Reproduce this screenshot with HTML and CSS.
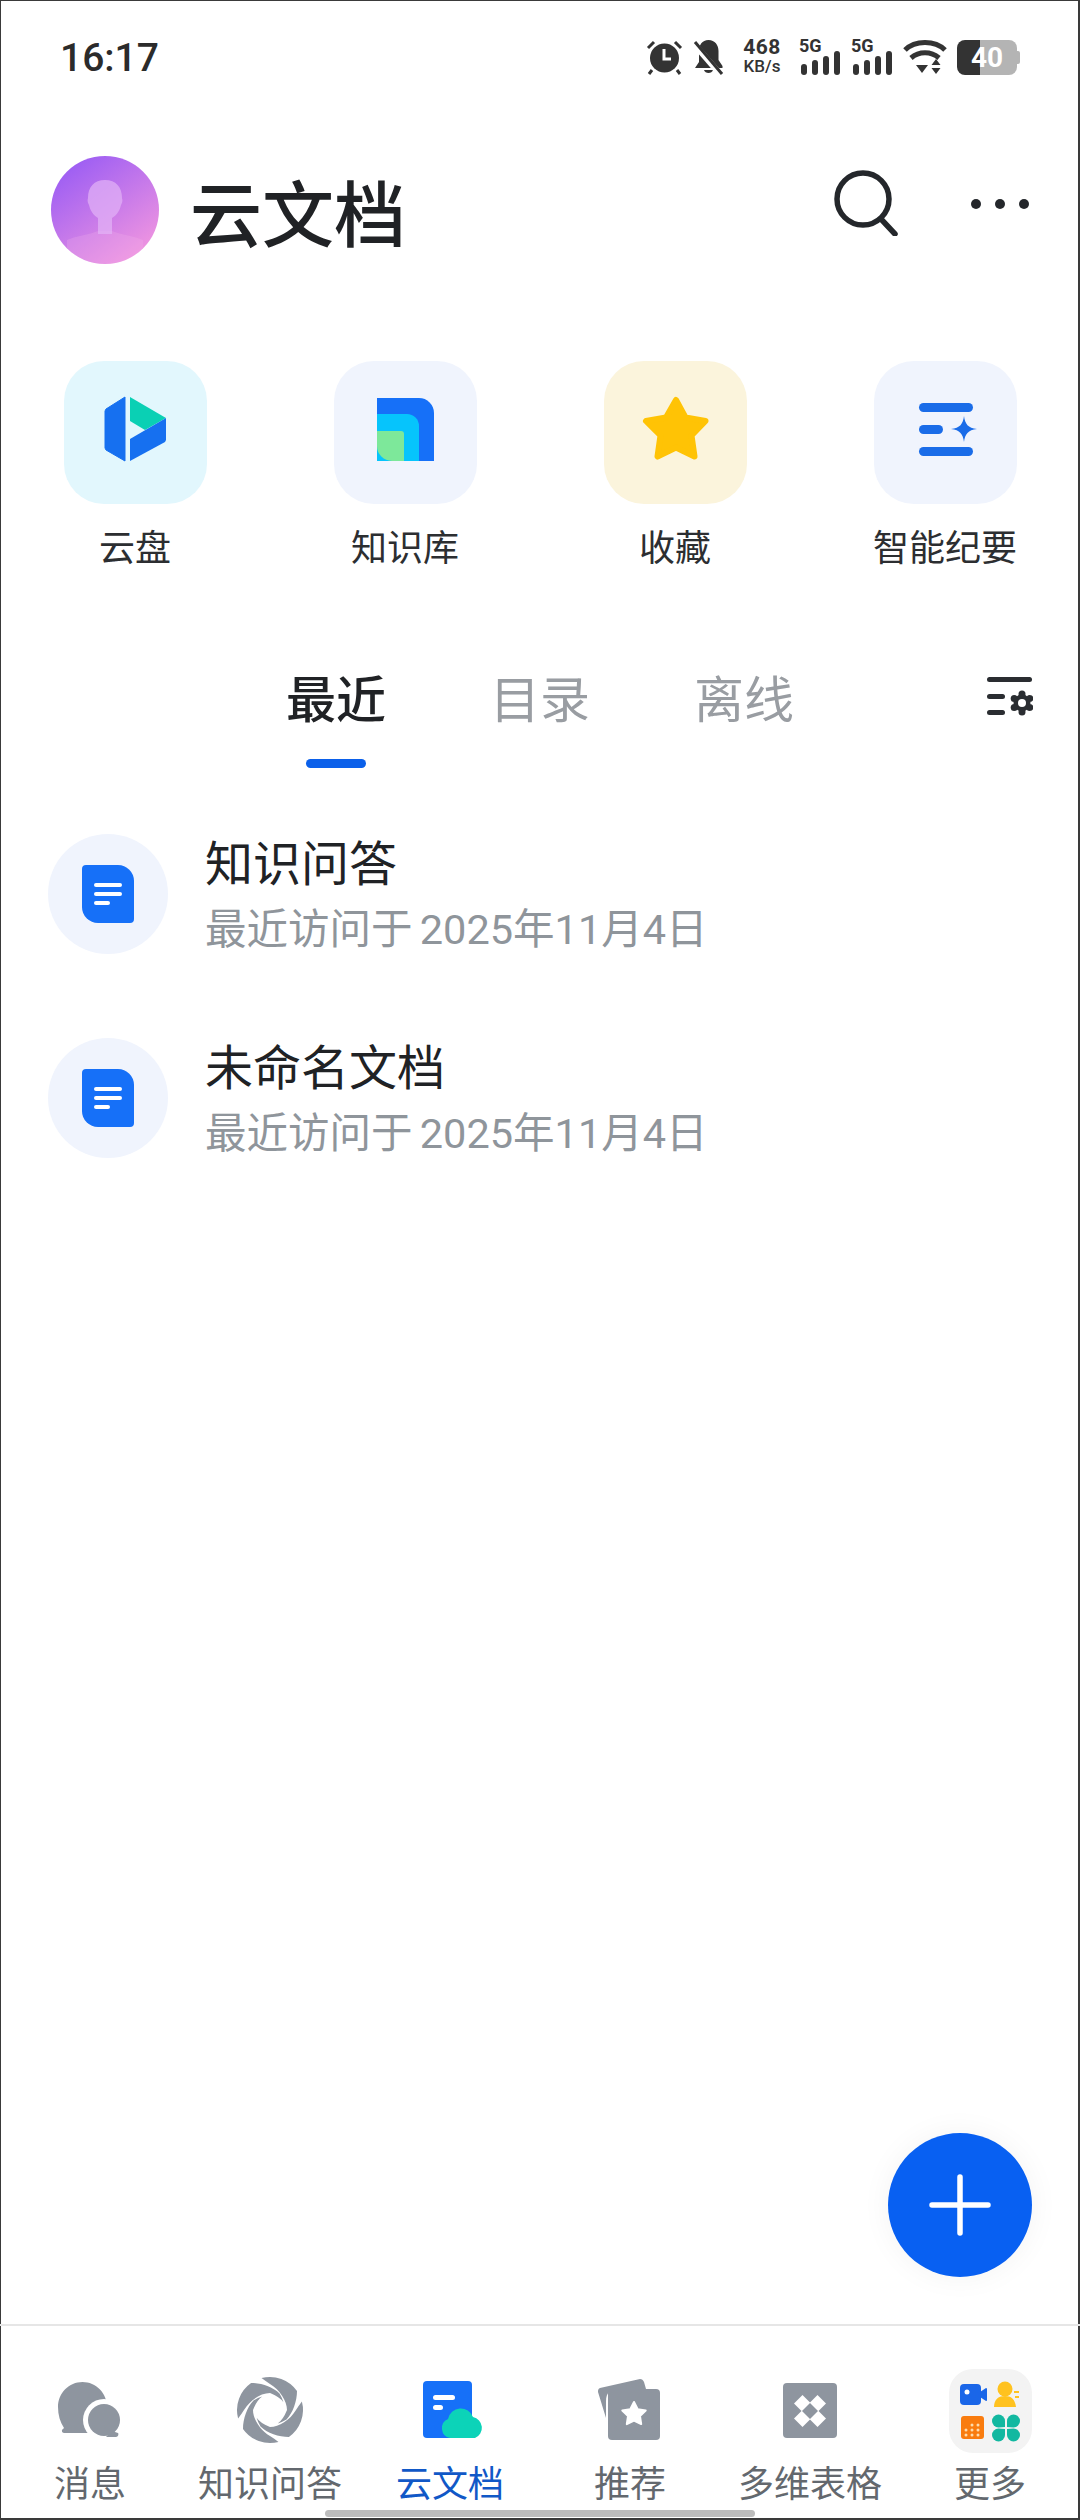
FILE: index.html
```html
<!DOCTYPE html>
<html lang="zh-CN">
<head>
  <meta charset="UTF-8" />
  <meta name="viewport" content="width=device-width, initial-scale=1" />
  <title>云文档</title>
  <link rel="stylesheet" href="styles.css">
</head>
<body>
  <div class="phone">
    <!-- status bar -->
    <div class="status">
      <span class="time">16:17</span>
      <div class="status-icons">
        <svg class="st-alarm" width="37" height="36" viewBox="0 0 37 36">
          <circle cx="18.5" cy="19" r="14.5" fill="#333"/>
          <path d="M18 10v10h7" fill="none" stroke="#fff" stroke-width="3"/>
          <path d="M2 9l6-6M35 9l-6-6M6 31l-3 4M31 31l3 4" stroke="#333" stroke-width="3" fill="none"/>
        </svg>
        <svg class="st-bell" width="31" height="36" viewBox="0 0 31 36">
          <path d="M15.5 1c6.500 0 10 5 10 11v9l4 6v2H2l4-6V12C6 6 9 1 15.500 1z" fill="#333"/>
          <path d="M11 31h9c-1 4-8 4-9 0z" fill="#333"/>
          <path d="M1 5l26 30" stroke="#fff" stroke-width="6"/>
          <path d="M2 3l27 32" stroke="#333" stroke-width="3"/>
        </svg>
        <div class="speed"><span>468</span><span>KB/s</span></div>
        <div class="sig sig-first">
          <span class="sig-label">5G</span>
          <div class="sig-bars"><i class="b1"></i><i class="b2"></i><i class="b3"></i><i class="b4"></i></div>
        </div>
        <div class="sig">
          <span class="sig-label">5G</span>
          <div class="sig-bars"><i class="b1"></i><i class="b2"></i><i class="b3"></i><i class="b4"></i></div>
        </div>
        <svg class="st-wifi" width="44" height="36" viewBox="0 0 44 36">
          <path d="M2 11C12 1 32 1 42 11" fill="none" stroke="#333" stroke-width="5"/>
          <path d="M8 19c8-7 20-7 28 0" fill="none" stroke="#333" stroke-width="5"/>
          <path d="M13 26h12l-6 8z" fill="#333"/>
          <path d="M33 20l4.500 6h-9zM33 35l4.500-6h-9z" fill="#333"/>
        </svg>
        <div class="battery"><span>40</span></div>
      </div>
    </div>

    <!-- title row -->
    <div class="top-bar">
      <svg class="avatar" width="108" height="108" viewBox="0 0 108 108">
        <defs>
          <linearGradient id="avatarBg" x1="0.15" y1="0.05" x2="0.8" y2="0.95">
            <stop offset="0" stop-color="#9a5cf4"/>
            <stop offset="1" stop-color="#f095e0"/>
          </linearGradient>
          <clipPath id="avatarClip"><circle cx="54" cy="54" r="54"/></clipPath>
        </defs>
        <circle cx="54" cy="54" r="54" fill="url(#avatarBg)"/>
        <g clip-path="url(#avatarClip)">
          <path d="M16 108V84c8-4 22-5 31-9h14c9 4 23 5 31 9v24z" fill="#f4b4ec" opacity="0.25"/>
          <path d="M47 78V62c-5-3-8-8-9-13-1-2-2-4-1-7 0-11 6-18 17-18s17 7 17 18c1 3 0 5-1 7-1 5-4 10-9 13v16z" fill="#e2b4f6" opacity="0.7"/>
        </g>
      </svg>
      <h1 class="page-title">云文档</h1>
      <svg class="ic-search" width="66" height="66" viewBox="0 0 66 66">
        <circle cx="29" cy="29" r="26" fill="none" stroke="#24272b" stroke-width="5.500"/>
        <path d="M47 49l14 15" stroke="#24272b" stroke-width="5.500" stroke-linecap="round"/>
      </svg>
      <svg class="ic-more" width="60" height="12" viewBox="0 0 60 12">
        <circle cx="6" cy="6" r="5" fill="#24272b"/>
        <circle cx="30" cy="6" r="5" fill="#24272b"/>
        <circle cx="54" cy="6" r="5" fill="#24272b"/>
      </svg>
    </div>

    <!-- shortcuts -->
    <div class="shortcuts">
      <div class="shortcut">
        <div class="tile tile-cyan">
          <svg width="143" height="143" viewBox="0 0 143 143">
            <path d="M61 36v64L42 89l-1-2V50l1-2z" fill="#1670f0" stroke="#1670f0" stroke-linejoin="round"/>
            <path d="M66 36l36 21-21 12-15-9z" fill="#0ad0b4"/>
            <path d="M102 57v22l-1 2-35 19V78z" fill="#1670f0"/>
          </svg>
        </div>
        <span class="shortcut-label">云盘</span>
      </div>
      <div class="shortcut">
        <div class="tile tile-blue">
          <svg width="143" height="143" viewBox="0 0 143 143">
            <path d="M43 37h42a15 15 0 0 1 15 15v48H43z" fill="#1670f8"/>
            <path d="M43 53h30a12 12 0 0 1 12 12v35H43z" fill="#06c4fc"/>
            <path d="M43 70h24a3 3 0 0 1 3 3v27H58a15 15 0 0 1-15-15z" fill="#7de89a"/>
          </svg>
        </div>
        <span class="shortcut-label">知识库</span>
      </div>
      <div class="shortcut">
        <div class="tile tile-yellow">
          <svg width="143" height="143" viewBox="0 0 143 143">
            <path d="M72 39l9.500 17.500 20 3.500-14 14.500 3 21-18.500-9-18.500 9 3-21L42 60l20-3.500z" fill="#ffc305" stroke="#ffc305" stroke-width="6" stroke-linejoin="round"/>
          </svg>
        </div>
        <span class="shortcut-label">收藏</span>
      </div>
      <div class="shortcut">
        <div class="tile tile-blue">
          <svg width="143" height="143" viewBox="0 0 143 143">
            <rect x="45" y="42" width="54" height="9" rx="4.500" fill="#1a6ce8"/>
            <rect x="45" y="64" width="24" height="9" rx="4.500" fill="#1a6ce8"/>
            <rect x="45" y="86" width="54" height="9" rx="4.500" fill="#1a6ce8"/>
            <path d="M90 55c1 8 4 12 13 13-9 1-12 5-13 13-1-8-4-12-13-13 9-1 12-5 13-13z" fill="#1a6ce8"/>
          </svg>
        </div>
        <span class="shortcut-label">智能纪要</span>
      </div>
    </div>

    <!-- tabs -->
    <div class="tabs">
      <div class="tab tab-active">最近<i class="tab-bar"></i></div>
      <div class="tab">目录</div>
      <div class="tab">离线</div>
      <svg class="ic-filter" width="46" height="40" viewBox="0 0 46 40">
        <rect y="0" width="45" height="5" rx="2.500" fill="#2a2d31"/>
        <rect y="17" width="18" height="5" rx="2.500" fill="#2a2d31"/>
        <rect y="33" width="18" height="5" rx="2.500" fill="#2a2d31"/>
        <g fill="#2a2d31" transform="translate(35 26)">
          <circle r="8.500"/>
          <circle cy="-9" r="3.500"/>
          <circle cy="9" r="3.500"/>
          <circle cx="7.800" cy="-4.500" r="3.500"/>
          <circle cx="-7.800" cy="-4.500" r="3.500"/>
          <circle cx="7.800" cy="4.500" r="3.500"/>
          <circle cx="-7.800" cy="4.500" r="3.500"/>
          <circle r="4" fill="#fff"/>
        </g>
      </svg>
    </div>

    <!-- recent docs -->
    <div class="doc-list">
      <div class="doc-row">
        <div class="doc-circle"><div class="doc-icon"><i></i><i></i><i class="short"></i></div></div>
        <div class="doc-text">
          <div class="doc-title">知识问答</div>
          <div class="doc-sub">最近访问于 2025年11月4日</div>
        </div>
      </div>
      <div class="doc-row">
        <div class="doc-circle"><div class="doc-icon"><i></i><i></i><i class="short"></i></div></div>
        <div class="doc-text">
          <div class="doc-title">未命名文档</div>
          <div class="doc-sub">最近访问于 2025年11月4日</div>
        </div>
      </div>
    </div>

    <button class="fab" type="button">
      <svg width="62" height="62" viewBox="0 0 62 62">
        <path d="M31 3v56M3 31h56" stroke="#fff" stroke-width="5.500" stroke-linecap="round"/>
      </svg>
    </button>

    <!-- bottom nav -->
    <nav class="nav">
      <div class="nav-item">
        <svg width="84" height="84" viewBox="0 0 84 84">
          <path d="M34.500 13C48 13 59 24 59 38c0 9-4 17-11 22l1 4H16c-2 0-3-3-1-4l1-1C12 53 10 46 10 38 10 24 21 13 34.500 13z" fill="#8e959f"/>
          <circle cx="56" cy="51" r="21" fill="#fff"/>
          <circle cx="56" cy="51" r="16" fill="#8e959f"/>
          <path d="M64 62l6 2c1 1 0 4-2 4h-10z" fill="#8e959f"/>
        </svg>
        <span>消息</span>
      </div>
      <div class="nav-item">
        <svg width="84" height="84" viewBox="0 0 84 84">
          <g transform="translate(42 41)" fill="#8e959f">
            <path id="blade" d="M-8.500-31.900A33 33 0 0 1 27-18.900C27-9 23 3 16.500 9.500Q12.500 12 7.750 13.400 13 10 17 0C17-9 10-20 0-26Q-4-28.500-8.500-31.900z"/>
            <use href="#blade" transform="rotate(90)"/>
            <use href="#blade" transform="rotate(180)"/>
            <use href="#blade" transform="rotate(270)"/>
          </g>
        </svg>
        <span>知识问答</span>
      </div>
      <div class="nav-item nav-active">
        <svg width="84" height="84" viewBox="0 0 84 84">
          <rect x="15" y="12" width="49" height="57" rx="4" fill="#1670f8"/>
          <rect x="25" y="26" width="22" height="5" rx="2.500" fill="#fff"/>
          <rect x="25" y="36" width="10" height="5" rx="2.500" fill="#fff"/>
          <path d="M42 69a10 10 0 0 1-2-19 13 13 0 0 1 25-2 11 11 0 0 1 2 21z" fill="#0cd3b8"/>
        </svg>
        <span>云文档</span>
      </div>
      <div class="nav-item">
        <svg width="84" height="84" viewBox="0 0 84 84">
          <path d="M12 19l40-9c2 0 3 1 4 3l2 7H30c-8 0-12 4-12 12v17l-8-26c0-2 0-3 2-4z" fill="#8e959f"/>
          <rect x="20" y="20" width="52" height="51" rx="4" fill="#8e959f"/>
          <path d="M46 33l3.700 7.200 8 1.300-5.700 5.600 1.200 8-7.200-3.600-7.200 3.600 1.200-8-5.700-5.600 8-1.300z" fill="#fff" stroke="#fff" stroke-width="2" stroke-linejoin="round"/>
        </svg>
        <span>推荐</span>
      </div>
      <div class="nav-item">
        <svg width="84" height="84" viewBox="0 0 84 84">
          <rect x="15" y="14" width="54" height="55" rx="4" fill="#8e959f"/>
          <g fill="#fff">
            <path d="M34.500 26l8.500 8.500-8.500 8.500-8.500-8.500z"/>
            <path d="M49.500 26l8.500 8.500-8.500 8.500-8.500-8.500z"/>
            <path d="M34.500 41l8.500 8.500-8.500 8.500-8.500-8.500z"/>
            <path d="M49.500 41l8.500 8.500-8.500 8.500-8.500-8.500z"/>
          </g>
          <path d="M42 34l8 8-8 8-8-8z" fill="#8e959f"/>
        </svg>
        <span>多维表格</span>
      </div>
      <div class="nav-item">
        <svg width="84" height="84" viewBox="0 0 84 84">
          <rect x="1" y="0" width="83" height="84" rx="24" fill="#f3f3f3"/>
          <rect x="12" y="15" width="21" height="21" rx="4" fill="#1a66e8"/>
          <path d="M32 23l6-4c1 0 1 1 1 1v11c0 1-1 1-1 1l-6-4z" fill="#1a66e8"/>
          <circle cx="19" cy="23" r="2.500" fill="#fff"/>
          <circle cx="57" cy="20" r="7.500" fill="#ffc21f"/>
          <path d="M46 38c0-8 5-11 11-11s10 3 11 11z" fill="#ffc21f"/>
          <path d="M66 23h5M67 28h4" stroke="#ffc21f" stroke-width="1.800"/>
          <rect x="13" y="47" width="23" height="23" rx="3" fill="#f97c0f"/>
          <g fill="#fddcae">
            <circle cx="24" cy="56" r="1.500"/><circle cx="30" cy="56" r="1.500"/>
            <circle cx="18" cy="61" r="1.500"/><circle cx="24" cy="61" r="1.500"/><circle cx="30" cy="61" r="1.500"/>
            <circle cx="18" cy="66" r="1.500"/><circle cx="24" cy="66" r="1.500"/><circle cx="30" cy="66" r="1.500"/>
          </g>
          <g fill="#12b8a0">
            <path d="M57 58V52a6.500 6.500 0 1 0-6.500 6.500z"/>
            <path d="M59 58V52a6.500 6.500 0 1 1 6.500 6.500z"/>
            <path d="M57 60v6a6.500 6.500 0 1 1-6.500-6.500z"/>
            <path d="M59 60v6a6.500 6.500 0 1 0 6.500-6.500z"/>
          </g>
        </svg>
        <span>更多</span>
      </div>
    </nav>
    <div class="home-bar"></div>
  </div>
</body>
</html>
```

FILE: styles.css
```css
* {
  box-sizing: border-box;
}
body {
  margin: 0;
  background: #fff;
  font-family: Roboto, "Noto Sans CJK SC", sans-serif;
  color: #202225;
}
.phone {
  position: relative;
  width: 1080px;
  height: 2520px;
  display: flex;
  flex-direction: column;
  overflow: hidden;
  background: #fff;
  box-shadow: inset 1px 1px 0 #3a3a3a, inset -2px -2px 0 #3a3a3a;
}

/* status bar */
.status {
  height: 90px;
  padding: 38px 60px 0;
  display: flex;
  justify-content: space-between;
  align-items: flex-start;
}
.time {
  margin-top: 1px;
  font-size: 39px;
  font-weight: 500;
  line-height: 38px;
  color: #2b2b2b;
}
.status-icons {
  display: flex;
  align-items: center;
  gap: 10px;
  height: 38px;
}
.speed {
  display: flex;
  flex-direction: column;
  align-items: center;
  margin-left: 7px;
  font-size: 17px;
  font-weight: 500;
  line-height: 19px;
  color: #333;
  width: 42px;
}
.speed span:first-child {
  font-size: 21px;
  font-weight: 700;
  letter-spacing: 0.5px;
}
.sig {
  display: flex;
  flex-direction: column;
  width: 42px;
}
.sig-first {
  margin-left: 6px;
}
.sig-label {
  font-size: 18px;
  font-weight: 700;
  line-height: 14px;
  color: #333;
}
.sig-bars {
  display: flex;
  align-items: flex-end;
  gap: 5px;
  height: 24px;
  margin: -2px 0 0 2px;
}
.sig-bars i {
  width: 6px;
  background: #333;
  border-radius: 3px;
}
.b1 { height: 11px; }
.b2 { height: 15px; }
.b3 { height: 19px; }
.b4 { height: 24px; }
.battery {
  width: 60px;
  height: 35px;
  margin-right: 3px;
  border-radius: 8px;
  background: linear-gradient(90deg, #333 38%, #b4b4b4 38%);
  display: flex;
  align-items: center;
  justify-content: center;
  color: #fff;
  font-size: 28px;
  font-weight: 700;
  position: relative;
}
.battery::after {
  content: "";
  position: absolute;
  right: -3px;
  top: 11px;
  width: 3px;
  height: 13px;
  border-radius: 0 2px 2px 0;
  background: #b4b4b4;
}

/* title row */
.top-bar {
  height: 108px;
  margin-top: 66px;
  padding: 0 50px 0 51px;
  display: flex;
  align-items: center;
}
.page-title {
  margin: 8px 0 0 31px;
  padding-top: 6px;
  font-size: 72px;
  font-weight: 500;
  line-height: 100px;
  color: #202225;
  flex: 1;
}
.ic-search {
  margin: -14px 70px 0 0;
}
.ic-more {
  margin-top: -12px;
}

/* shortcuts */
.shortcuts {
  margin-top: 97px;
  display: grid;
  grid-template-columns: repeat(4, 270px);
}
.shortcut {
  display: flex;
  flex-direction: column;
  align-items: center;
}
.tile {
  width: 143px;
  height: 143px;
  border-radius: 40px;
}
.tile svg {
  display: block;
}
.tile-cyan { background: #e2f7fd; }
.tile-blue { background: #f0f4fd; }
.tile-yellow { background: #fbf4dc; }
.shortcut-label {
  margin-top: 27px;
  font-size: 36px;
  line-height: 36px;
  color: #2c2e31;
}

/* tabs */
.tabs {
  margin-top: 104px;
  padding: 0 48px 0 286px;
  display: flex;
  gap: 104px;
  height: 97px;
}
.tab {
  position: relative;
  height: 60px;
  font-size: 50px;
  line-height: 60px;
  color: #999da2;
}
.tab-active {
  font-weight: 500;
  color: #202225;
}
.tab-bar {
  position: absolute;
  left: 20px;
  top: 88px;
  width: 60px;
  height: 9px;
  border-radius: 5px;
  background: #0b60ea;
}
.ic-filter {
  margin: 6px -1px 0 auto;
}

/* doc rows */
.doc-list {
  margin-top: 66px;
  padding-left: 48px;
  display: flex;
  flex-direction: column;
  gap: 84px;
}
.doc-row {
  height: 120px;
  display: flex;
  align-items: center;
  gap: 37px;
}
.doc-circle {
  width: 120px;
  height: 120px;
  border-radius: 50%;
  background: #f0f4fd;
  display: flex;
  align-items: center;
  justify-content: center;
}
.doc-icon {
  width: 52px;
  height: 58px;
  padding: 18px 12px 0;
  background: #1670f8;
  border-radius: 4px 16px 4px 16px;
  display: flex;
  flex-direction: column;
  gap: 5px;
}
.doc-icon i {
  display: block;
  height: 4px;
  border-radius: 2px;
  background: #fff;
}
.doc-icon i.short {
  width: 16px;
}
.doc-text {
  padding-top: 3px;
  display: flex;
  flex-direction: column;
  gap: 11px;
}
.doc-title {
  font-size: 48px;
  line-height: 58px;
  color: #202225;
}
.doc-sub {
  font-size: 41.5px;
  line-height: 50px;
  word-spacing: -3px;
  color: #8f959b;
}

/* floating add button */
.fab {
  position: absolute;
  left: 888px;
  top: 2133px;
  width: 144px;
  height: 144px;
  padding: 0;
  border: none;
  border-radius: 50%;
  background: #0860f2;
  box-shadow: 0 0 30px rgba(0, 0, 0, 0.05);
  display: flex;
  align-items: center;
  justify-content: center;
}

/* bottom nav */
.nav {
  margin-top: auto;
  height: 196px;
  padding-top: 43px;
  border-top: 2px solid #e6e6e6;
  display: grid;
  grid-template-columns: repeat(6, 180px);
}
.nav-item {
  display: flex;
  flex-direction: column;
  align-items: center;
  gap: 14px;
  font-size: 36px;
  line-height: 36px;
  color: #63686e;
}
.nav-item svg {
  display: block;
}
.nav-active {
  color: #1158c7;
}
.home-bar {
  position: absolute;
  left: 325px;
  top: 2510px;
  width: 430px;
  height: 7px;
  border-radius: 4px;
  background: #bdbdbd;
}
```
